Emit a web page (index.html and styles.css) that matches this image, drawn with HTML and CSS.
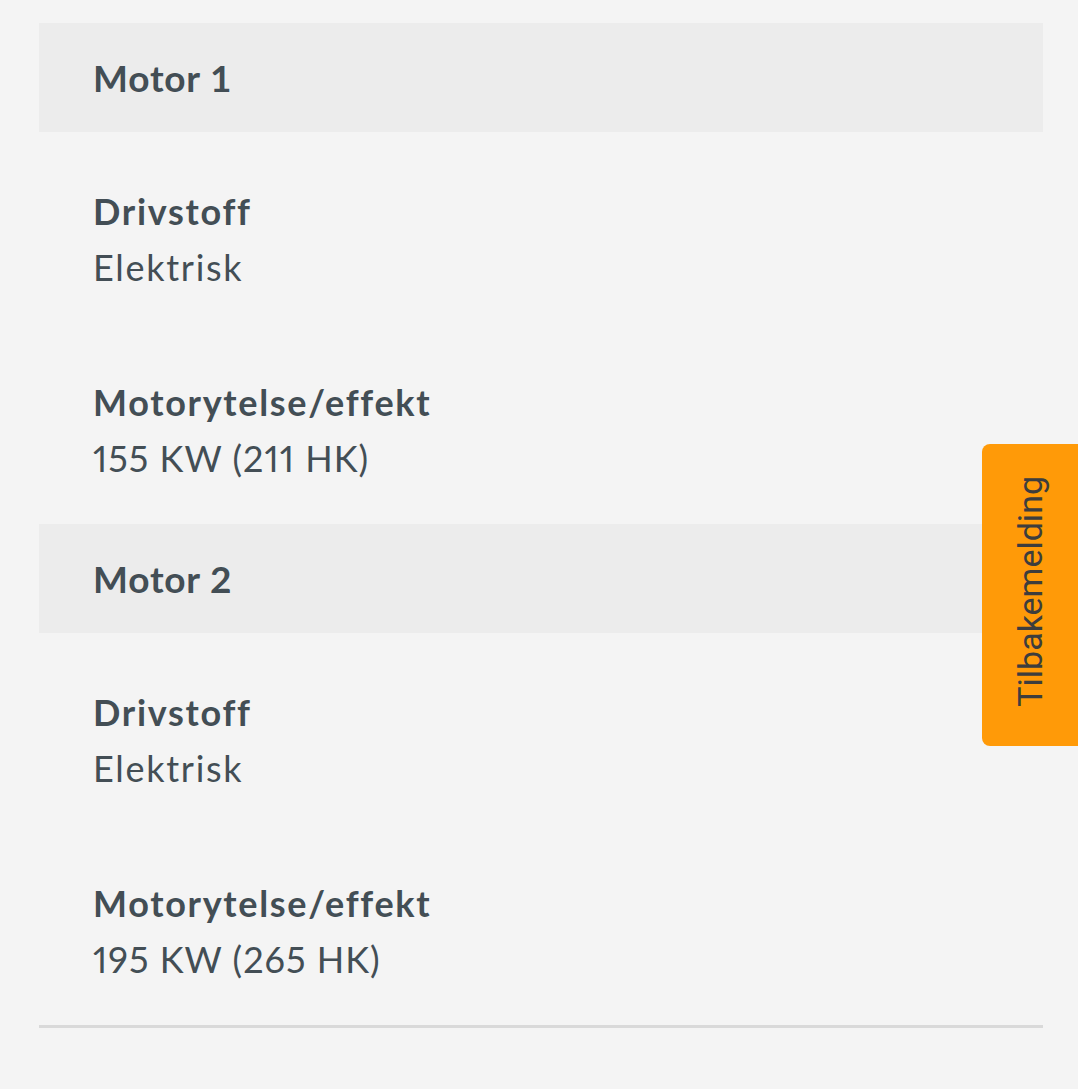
FILE: index.html
```html
<!DOCTYPE html>
<html lang="no">
<head>
<meta charset="utf-8">
<title>Motor</title>
<link rel="stylesheet" href="styles.css">
</head>
<body>
<div class="panel">
  <section class="motor">
    <h2 class="motor-title">Motor 1</h2>
    <dl class="specs">
      <div class="spec">
        <dt class="spec-label">Drivstoff</dt>
        <dd class="spec-value">Elektrisk</dd>
      </div>
      <div class="spec">
        <dt class="spec-label">Motorytelse/effekt</dt>
        <dd class="spec-value spec-number">155 KW (211 HK)</dd>
      </div>
    </dl>
  </section>
  <section class="motor">
    <h2 class="motor-title">Motor 2</h2>
    <dl class="specs">
      <div class="spec">
        <dt class="spec-label">Drivstoff</dt>
        <dd class="spec-value">Elektrisk</dd>
      </div>
      <div class="spec">
        <dt class="spec-label">Motorytelse/effekt</dt>
        <dd class="spec-value spec-number">195 KW (265 HK)</dd>
      </div>
    </dl>
  </section>
</div>
<button class="feedback-tab" type="button"><span class="feedback-text">Tilbakemelding</span></button>
</body>
</html>
```

FILE: styles.css
```css
html, body {
  margin: 0;
  padding: 0;
  background: #f4f4f4;
}

body {
  font-family: Lato, "Open Sans", "Noto Sans", sans-serif;
  color: #434e55;
  padding: 23px 35px 0 39px;
}

.panel {
  border-bottom: 3px solid #d9d9d9;
}

.motor-title {
  margin: 0;
  height: 109px;
  display: flex;
  align-items: center;
  padding-left: 54px;
  background: #ececec;
  font-size: 37px;
  font-weight: 700;
  letter-spacing: 0.8px;
}

.specs {
  margin: 0;
  padding: 0 0 10px 0;
}

.spec {
  padding: 51px 0 28px 54px;
}

.spec-label {
  font-size: 36px;
  font-weight: 700;
  line-height: 56px;
  letter-spacing: 1.7px;
}

.spec-value {
  margin: 0;
  font-size: 36px;
  font-weight: 400;
  line-height: 56px;
  letter-spacing: 1.7px;
}

.spec-number {
  font-variant-numeric: proportional-nums;
  letter-spacing: 1px;
}

.feedback-tab {
  position: fixed;
  top: 444px;
  right: 0;
  width: 96px;
  height: 302px;
  border: 0;
  padding: 0 0 8px 0;
  background: #ff9a08;
  border-radius: 8px 0 0 8px;
  display: flex;
  align-items: center;
  justify-content: center;
  cursor: pointer;
}

.feedback-text {
  writing-mode: vertical-rl;
  transform: rotate(180deg);
  font-family: Roboto, "Liberation Sans", sans-serif;
  font-size: 34px;
  color: #3d3d3d;
  line-height: 1;
}
```
